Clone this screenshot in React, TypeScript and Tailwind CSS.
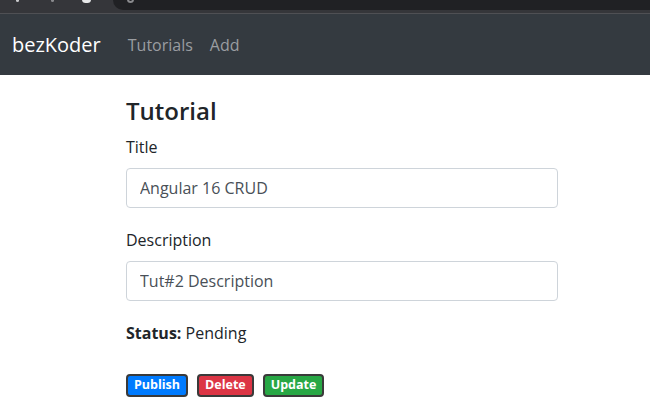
import React from "react";

const font = { fontFamily: '"Open Sans", "Noto Sans", Arial, sans-serif' };

function BrowserStrip() {
  return (
    <div className="relative h-[14px] bg-[#35363a] border-b border-[#4f5054] overflow-hidden">
      <span className="absolute left-[16px] top-[-3px] h-[5px] w-[3px] rounded-full bg-[#c8c9cb]" />
      <span className="absolute left-[51px] top-[-3px] h-[5px] w-[3px] rounded-full bg-[#8a8b8e]" />
      <span className="absolute left-[82px] top-[-4px] h-[7px] w-[9px] rounded-full bg-[#e8e9ea]" />
      <div className="absolute left-[113px] right-0 top-0 h-[10px] rounded-bl-[10px] bg-[#202124]">
        <span className="absolute left-[14px] top-[-4px] h-[7px] w-[7px] rounded-full border-2 border-[#8a8b8e]" />
      </div>
    </div>
  );
}

export default function App() {
  return (
    <div className="min-h-[400px] bg-white" style={font}>
      <BrowserStrip />
      <nav className="flex h-[61px] items-center bg-[#343a40] px-3">
        <a className="mr-[27px] text-[20px] leading-[30px] text-white">bezKoder</a>
        <div className="flex gap-[17px] text-[16px] text-[#9a9da1]">
          <a>Tutorials</a>
          <a>Add</a>
        </div>
      </nav>

      <div className="ml-[126px] w-[432px] pt-[21px]">
        <h4 className="text-[24px] font-semibold leading-[29px] text-[#212529]">Tutorial</h4>
        <form className="mt-[10px]">
          <div>
            <label className="block text-[16px] leading-[24px] text-[#212529]">Title</label>
            <input
              className="mt-[9px] block h-[40px] w-full rounded-[4px] border border-[#ced4da] px-[13px] text-[16px] text-[#495057] outline-none"
              defaultValue="Angular 16 CRUD"
            />
          </div>
          <div className="mt-[20px]">
            <label className="block text-[16px] leading-[24px] text-[#212529]">Description</label>
            <input
              className="mt-[9px] block h-[40px] w-full rounded-[4px] border border-[#ced4da] px-[13px] text-[16px] text-[#495057] outline-none"
              defaultValue="Tut#2 Description"
            />
          </div>
          <div className="mt-[20px] text-[16px] leading-[24px] text-[#212529]">
            <label className="font-bold">Status:</label> Pending
          </div>
        </form>

        <div className="mt-[29px] flex gap-[9px]">
          <button className="h-[23px] rounded-[4px] border-2 border-[#3a3a3a] bg-[#007bff] px-[6px] text-[12.5px] font-bold leading-none text-white">
            Publish
          </button>
          <button className="h-[23px] rounded-[4px] border-2 border-[#3a3a3a] bg-[#dc3545] px-[6px] text-[12.5px] font-bold leading-none text-white">
            Delete
          </button>
          <button className="h-[23px] rounded-[4px] border-2 border-[#3a3a3a] bg-[#28a745] px-[6px] text-[12.5px] font-bold leading-none text-white">
            Update
          </button>
        </div>
      </div>
    </div>
  );
}
